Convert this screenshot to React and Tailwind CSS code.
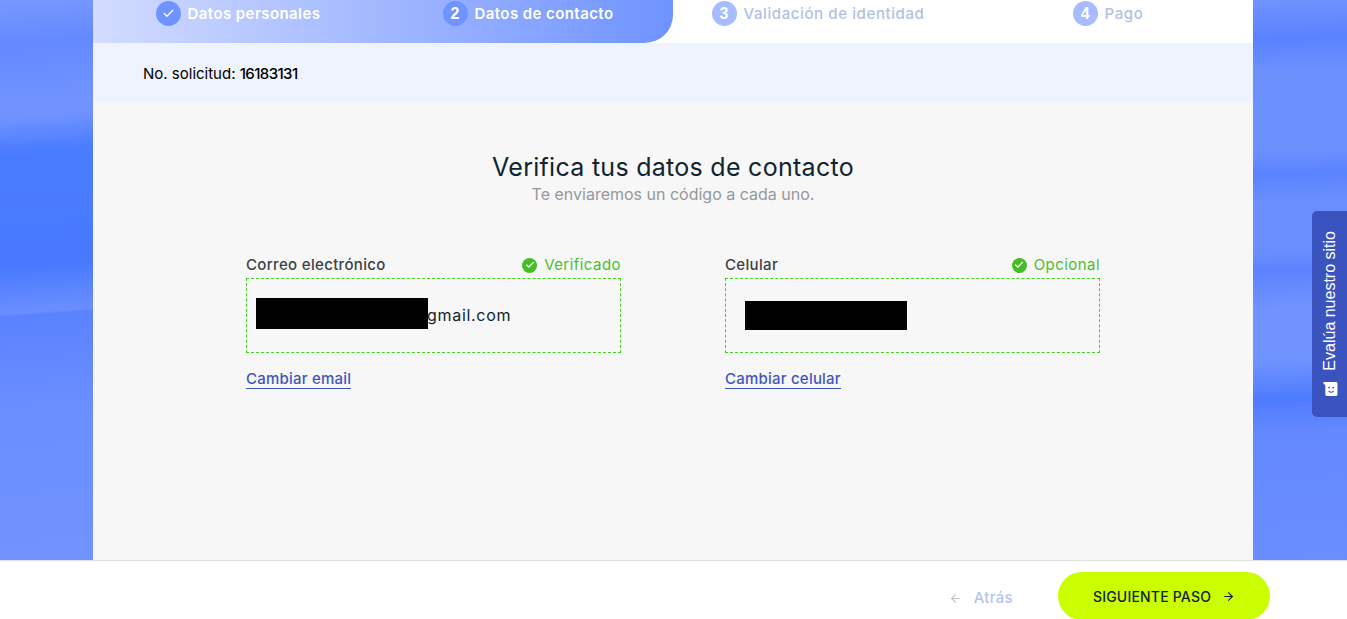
import { Check, ArrowLeft, ArrowRight } from "lucide-react"

const steps = [
  { label: "Datos personales", done: true, active: true },
  { label: "Datos de contacto", num: 2, active: true },
  { label: "Validación de identidad", num: 3 },
  { label: "Pago", num: 4 },
]

function Step({ step }) {
  return (
    <div className="flex justify-center items-start gap-[7px]">
      <div className={`w-[25px] h-[25px] rounded-full flex items-center justify-center text-white text-[16px] font-bold font-['Liberation_Sans',sans-serif] ${step.active ? "bg-[#6f93ff]" : "bg-[#a6bcff]"}`}>
        {step.done ? <Check size={13} strokeWidth={2.5} /> : step.num}
      </div>
      <span className={`text-[15px] leading-[25px] ${step.active ? "text-white font-semibold tracking-[0.42px]" : "text-[#b3bfe3] font-medium tracking-[0.6px]"}`}>{step.label}</span>
    </div>
  )
}

function Field({ label, status, link, children }) {
  return (
    <div className="w-[375px]">
      <div className="flex justify-between items-center h-[28px] pt-[2px]">
        <span className="text-[15px] text-[#3c4045] font-medium tracking-[0.33px]">{label}</span>
        <span className="flex items-center gap-[7px] text-[15px] text-[#4cc02c] tracking-[0.45px]">
          <span className="w-[15px] h-[15px] rounded-full bg-[#45bd26] flex items-center justify-center text-white">
            <Check size={10} strokeWidth={3} />
          </span>
          {status}
        </span>
      </div>
      <div className="h-[75px] border border-dashed border-[#45cf1f] flex items-center">{children}</div>
      <a className="inline-block mt-[17px] text-[15px] leading-[18px] tracking-[0.22px] text-[#3d56bd] border-b border-[#3d56bd] font-medium">{link}</a>
    </div>
  )
}

export default function App() {
  return (
    <div className="h-[619px] overflow-hidden flex flex-col bg-white font-['Inter',sans-serif]">
      <div className="h-[560px] shrink-0 flex">
        <div className="w-[93px] bg-[linear-gradient(176deg,#7798ff_0%,#6489ff_8%,#7193ff_18%,#6f92ff_21%,#4a7cff_27%,#4879ff_47%,#6a8eff_55.5%,#5a82ff_56%,#6a8eff_72%,#7193ff_100%)]" />
        <main className="flex-1 flex flex-col bg-[#f7f7f7]">
          <div className="relative h-[43px] bg-white grid grid-cols-4 pt-px">
            <div className="absolute left-0 top-0 bottom-0 w-[580px] rounded-br-[28px] bg-[linear-gradient(90deg,#d3dcff_0%,#6f93ff_100%)]" />
            {steps.map((step) => (
              <div key={step.label} className="relative">
                <Step step={step} />
              </div>
            ))}
          </div>
          <div className="h-[59px] bg-[#eff3fe] flex items-center pl-[50px] pt-[3px] text-[15px] text-black">
            No. solicitud:&nbsp;<span className="font-medium tracking-[-0.6px]">16183131</span>
          </div>
          <div className="text-center pt-[49px]">
            <h1 className="text-[25px] leading-[32px] tracking-[0.28px] text-[#10242f]">Verifica tus datos de contacto</h1>
            <p className="text-[16px] leading-[20px] mt-[1px] text-[#95989c]">Te enviaremos un código a cada uno.</p>
          </div>
          <div className="flex justify-center gap-[104px] mt-[46px]">
            <Field label="Correo electrónico" status="Verificado" link="Cambiar email">
              <div className="relative ml-[9px] w-[172px] h-[31px] mb-[4px] bg-black" />
              <span className="text-[16px] text-[#10242f] tracking-[0.7px] -ml-px -mt-[1px]">gmail.com</span>
            </Field>
            <Field label="Celular" status="Opcional" link="Cambiar celular">
              <div className="ml-[19px] w-[162px] h-[29px] bg-black" />
            </Field>
          </div>
        </main>
        <div className="w-[94px] bg-[linear-gradient(178deg,#7193ff_0%,#5a82ff_7%,#6d90ff_13%,#6d90ff_27%,#5a83ff_31%,#6a8eff_36%,#6a8eff_45%,#5b83ff_48%,#7193ff_55%,#7093ff_64%,#4e7cff_71%,#6488ff_77%,#6a8dff_100%)]" />
      </div>

      <footer className="relative flex-1 min-h-0 border-t border-[#dfdfdf] flex items-start justify-end pr-[77px]">
        <div className="flex items-center gap-[12px] mt-[26px] mr-[45px] text-[15px] font-medium tracking-[0.3px] text-[#b6c3ec]">
          <ArrowLeft size={13} className="text-[#b9bfcc]" />
          Atrás
        </div>
        <button className="mt-[11px] w-[212px] h-[48px] shrink-0 rounded-full bg-[#c9ff00] flex items-center justify-center gap-[11px] text-[14px] font-medium tracking-[0.2px] text-[#10242f]">
          SIGUIENTE PASO
          <ArrowRight size={13} />
        </button>
      </footer>

      <div className="absolute right-0 top-[211px] w-[35px] h-[206px] bg-[#3a53bf] rounded-l-[5px] flex flex-col items-center justify-end pb-[21px] gap-[11px] text-white">
        <span className="[writing-mode:vertical-rl] rotate-180 font-['Liberation_Sans',sans-serif] text-[16px] leading-none">Evalúa nuestro sitio</span>
        <svg width="16" height="14" viewBox="0 0 16 15">
          <path d="M3 0H14.5A1.5 1.5 0 0 1 16 1.5V13.5A1.5 1.5 0 0 1 14.5 15H4.5A1.5 1.5 0 0 1 3 13.5V3.5L1 1.5Q0.5 .5 1.5 0Z" fill="#fff" />
          <circle cx="7" cy="6" r="1" fill="#3a53bf" />
          <circle cx="11.5" cy="6" r="1" fill="#3a53bf" />
          <path d="M6.5 9.5Q9.2 12.5 12 9.5" stroke="#3a53bf" strokeWidth="1.2" fill="none" />
        </svg>
      </div>
    </div>
  )
}
